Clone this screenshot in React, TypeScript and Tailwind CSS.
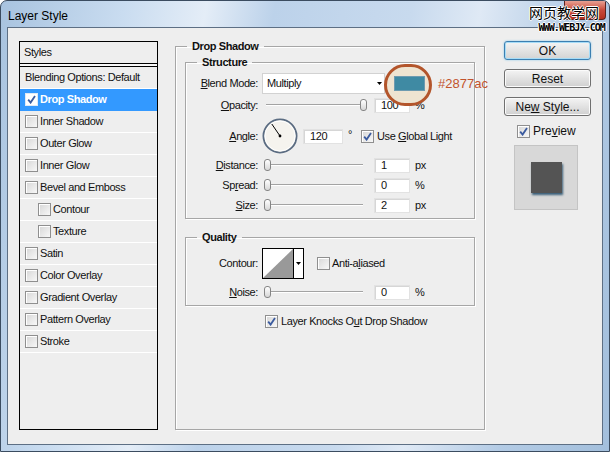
import React from "react"

function Check({ checked = false, onBlue = false }: { checked?: boolean; onBlue?: boolean }) {
  return (
    <span
      className={
        onBlue
          ? "flex h-[13px] w-[13px] shrink-0 items-center justify-center border border-[#dfe9f5] bg-white"
          : "flex h-[13px] w-[13px] shrink-0 items-center justify-center border border-[#8f8f8f] bg-[linear-gradient(135deg,#d6d6d6,#f8f8f8)] shadow-[inset_1px_1px_0_#fff]"
      }
    >
      {checked && (
        <svg width="9" height="9" viewBox="0 0 9 9">
          <path d="M1.2 4.6 L3.6 7.6 L8 1" fill="none" stroke="#3b5b9f" strokeWidth="1.8" />
        </svg>
      )}
    </span>
  )
}

function Label({ children }: { children: React.ReactNode }) {
  return <span className="w-[72px] shrink-0 text-right">{children}</span>
}

function Input({ value, w = "w-[36px]" }: { value: string; w?: string }) {
  return (
    <span className={`${w} flex h-[15px] shrink-0 items-center border border-[#e2e2e2] bg-white pl-[6px] shadow-[inset_1px_1px_0_#d6d6d6]`}>
      {value}
    </span>
  )
}

function Slider({ pos }: { pos: number }) {
  return (
    <div className="relative ml-[4px] h-[16px] w-[106px] shrink-0">
      <div className="absolute left-[4px] right-[5px] top-[7px] h-[2px] border-t border-[#a3a3a3] bg-white" />
      <div
        className="absolute top-[2px] h-[12px] w-[7px] rounded-[3px] border border-[#858585] bg-gradient-to-b from-white to-[#d6d6d6]"
        style={{ left: pos }}
      />
    </div>
  )
}

function SliderRow({ label, value, unit, pos, mt }: { label: React.ReactNode; value: string; unit: string; pos: number; mt: string }) {
  return (
    <div className={`${mt} flex h-[16px] items-center`}>
      <Label>{label}</Label>
      <Slider pos={pos} />
      <span className="ml-[6px]">
        <Input value={value} />
      </span>
      <span className="ml-[5px]">{unit}</span>
    </div>
  )
}

const styles: { name: string; sub?: boolean; checked?: boolean; active?: boolean }[] = [
  { name: "Drop Shadow", checked: true, active: true },
  { name: "Inner Shadow" },
  { name: "Outer Glow" },
  { name: "Inner Glow" },
  { name: "Bevel and Emboss" },
  { name: "Contour", sub: true },
  { name: "Texture", sub: true },
  { name: "Satin" },
  { name: "Color Overlay" },
  { name: "Gradient Overlay" },
  { name: "Pattern Overlay" },
  { name: "Stroke" },
]

function Button({ children, primary = false }: { children: React.ReactNode; primary?: boolean }) {
  return (
    <div
      className={
        primary
          ? "flex h-[19px] w-[87px] items-center justify-center rounded-[3px] border border-[#3c7fb1] bg-gradient-to-b from-[#f4f4f4] to-[#d3d3d3] shadow-[inset_0_0_0_1px_#a6dcf7,0_0_2px_#7fc4ec]"
          : "flex h-[19px] w-[87px] items-center justify-center rounded-[3px] border border-[#707070] bg-gradient-to-b from-[#f4f4f4] to-[#d0d0d0] shadow-[inset_0_0_0_1px_#fbfbfb]"
      }
    >
      {children}
    </div>
  )
}

export default function App() {
  return (
    <div className="relative flex h-[452px] w-[610px] flex-col overflow-hidden rounded-t-[7px] border border-[#3b4c60] bg-[linear-gradient(100deg,#a8c3df_0%,#c9dcf0_18%,#e4edf7_30%,#bcd2ea_40%,#c8daee_60%,#dfe9f5_70%,#b3cbe5_84%,#a3bfdc_100%)] font-['Liberation_Sans',Arial,sans-serif] text-[11px] tracking-[-0.4px] text-[#111]">
      {/* titel */}
      <div className="flex h-[26px] shrink-0 items-start justify-between">
        <span className="pl-[7px] pt-[6px] text-[12px] tracking-normal text-black">Layer Style</span>
        <div className="mr-[3px] h-[19px] w-[42px] rounded-b-[4px] border border-t-0 border-[#5a2320] bg-gradient-to-b from-[#e8a093] via-[#c8493a] to-[#b3301f]" />
      </div>

      {/* watermark */}
      <div className="absolute right-[4px] top-[4px] flex flex-col items-end leading-none">
        <span className="mr-[6px] font-['Noto_Sans_CJK_SC',sans-serif] text-[14px] leading-[15px] tracking-normal text-black [text-shadow:1px_0_0_#fff,-1px_0_0_#fff,0_1px_0_#fff,0_-1px_0_#fff]">
          网页教学网
        </span>
        <span className="mt-[3px] font-['DejaVu_Sans_Mono',monospace] text-[10px] font-bold leading-[10px] tracking-[-0.9px] text-black [text-shadow:1px_0_0_#fff,-1px_0_0_#fff,0_1px_0_#fff,0_-1px_0_#fff]">
          WWW.WEBJX.COM
        </span>
      </div>

      {/* client */}
      <div className="mx-[6px] mb-[6px] flex flex-1 items-start border border-[#5d6f84] bg-[#eeeeee] pl-[11px]">
        {/* styles list */}
        <div className="mt-[13px] flex h-[389px] w-[139px] shrink-0 flex-col border border-black">
          <div className="flex h-[22px] shrink-0 items-center border-b border-black pl-[4px]">Styles</div>
          <div className="h-[2px] shrink-0 bg-[#f7f7f7]" />
          <div className="flex h-[23px] shrink-0 items-center border-t border-b border-t-black border-b-white pl-[5px]">
            Blending Options: Default
          </div>
          {styles.map((s) => (
            <div
              key={s.name}
              className={
                s.active
                  ? "flex h-[22px] shrink-0 items-center gap-[2px] border-b border-[#3399ff] bg-[#3399ff] pl-[5px] font-bold text-white"
                  : s.sub
                    ? "flex h-[22px] shrink-0 items-center gap-[2px] border-b border-white pl-[18px]"
                    : "flex h-[22px] shrink-0 items-center gap-[2px] border-b border-white pl-[5px]"
              }
            >
              <Check checked={s.checked} onBlue={s.active} />
              <span>{s.name}</span>
            </div>
          ))}
        </div>

        {/* drop shadow */}
        <fieldset className="ml-[17px] mt-[12px] h-[390px] w-[310px] shrink-0 border border-[#a6a6a6] shadow-[inset_1px_1px_0_#fff,1px_1px_0_#fff]">
          <legend className="ml-[11px] px-[5px] font-bold leading-[12px]">Drop Shadow</legend>

          <div className="px-[9px] pt-[4px]">
            <fieldset className="border border-[#a6a6a6] pb-[5px] shadow-[inset_1px_1px_0_#fff,1px_1px_0_#fff]">
              <legend className="ml-[11px] px-[5px] font-bold leading-[12px]">Structure</legend>

              <div className="mt-[5px] flex h-[21px] items-center">
                <Label>
                  <u>B</u>lend Mode:
                </Label>
                <div className="ml-[4px] flex h-[21px] w-[123px] shrink-0 items-center justify-between border border-[#d2d2d2] bg-white pl-[4px] pr-[2px]">
                  <span>Multiply</span>
                  <svg width="5" height="3" viewBox="0 0 5 3">
                    <path d="M0 0 H5 L2.5 3 Z" fill="#000" />
                  </svg>
                </div>
                <div className="relative ml-[9px] h-[15px] w-[31px] shrink-0">
                  <div className="absolute left-[-10px] top-[-12px] z-10 h-[42px] w-[48px] rounded-full border-[3px] border-[#b3552b] bg-[#eee4d1]" />
                  <div className="relative z-20 h-[15px] w-[31px] border border-[#6d9bb0] bg-[#3f8aa3]" />
                  <span className="absolute left-[44px] top-[-2px] z-20 font-['Liberation_Sans',Arial,sans-serif] text-[13px] tracking-normal text-[#c2532c]">
                    #2877ac
                  </span>
                </div>
              </div>

              <SliderRow label={<><u>O</u>pacity:</>} value="100" unit="%" pos={98} mt="mt-[3px]" />

              <div className="mt-[5px] flex h-[36px] items-center">
                <Label>
                  <u>A</u>ngle:
                </Label>
                <svg className="ml-[4px] shrink-0" width="36" height="36" viewBox="0 0 36 36">
                  <circle cx="18" cy="18" r="16.6" fill="#f5f3ee" stroke="#5b6c82" strokeWidth="1.8" />
                  <circle cx="18" cy="18" r="15" fill="none" stroke="#fff" strokeWidth="1" />
                  <line x1="18" y1="18" x2="9.8" y2="6" stroke="#000" strokeWidth="1" />
                  <circle cx="18" cy="18" r="1.4" fill="#000" />
                </svg>
                <span className="ml-[5px]">
                  <Input value="120" w="w-[40px]" />
                </span>
                <span className="ml-[5px] self-start pt-[8px]">°</span>
                <span className="ml-[9px]">
                  <Check checked />
                </span>
                <span className="ml-[3px]">
                  Use <u>G</u>lobal Light
                </span>
              </div>

              <SliderRow label={<><u>D</u>istance:</>} value="1" unit="px" pos={2} mt="mt-[3px]" />
              <SliderRow label={<>Sp<u>r</u>ead:</>} value="0" unit="%" pos={2} mt="mt-[4px]" />
              <SliderRow label={<><u>S</u>ize:</>} value="2" unit="px" pos={2} mt="mt-[4px]" />
            </fieldset>

            <fieldset className="mt-[12px] border border-[#a6a6a6] pb-[5px] shadow-[inset_1px_1px_0_#fff,1px_1px_0_#fff]">
              <legend className="ml-[11px] px-[5px] font-bold leading-[12px]">Quality</legend>

              <div className="mt-[5px] flex h-[31px] items-center">
                <Label>Contour:</Label>
                <div className="ml-[4px] flex h-[31px] w-[42px] shrink-0 border border-black bg-white">
                  <svg width="30" height="29" viewBox="0 0 30 29">
                    <path d="M0 29 L30 0 L30 29 Z" fill="#999" />
                  </svg>
                  <div className="flex flex-1 items-center justify-center border-l border-black">
                    <svg width="5" height="3" viewBox="0 0 5 3">
                      <path d="M0 0 H5 L2.5 3 Z" fill="#000" />
                    </svg>
                  </div>
                </div>
                <span className="ml-[13px]">
                  <Check />
                </span>
                <span className="ml-[2px]">
                  Anti-a<u>l</u>iased
                </span>
              </div>

              <SliderRow label={<><u>N</u>oise:</>} value="0" unit="%" pos={2} mt="mt-[5px]" />
            </fieldset>

            <div className="mt-[8px] flex h-[14px] items-center pl-[80px]">
              <Check checked />
              <span className="ml-[3px]">
                Layer Knocks O<u>u</u>t Drop Shadow
              </span>
            </div>
          </div>
        </fieldset>

        {/* buttons */}
        <div className="ml-[19px] mt-[13px] flex flex-col text-[12px] tracking-normal">
          <Button primary>OK</Button>
          <div className="mt-[9px]">
            <Button>Reset</Button>
          </div>
          <div className="mt-[9px]">
            <Button>
              <span>
                Ne<u>w</u> Style...
              </span>
            </Button>
          </div>
          <div className="ml-[13px] mt-[8px] flex h-[14px] items-center gap-[3px]">
            <Check checked />
            <span>
              Pre<u>v</u>iew
            </span>
          </div>
          <div className="ml-[10px] mt-[7px] flex h-[65px] w-[64px] items-center justify-center border border-[#c4c4c4] bg-[#d8d8d8]">
            <div className="h-[31px] w-[31px] bg-[#545454] shadow-[1px_2px_2px_#3a5f78]" />
          </div>
        </div>
      </div>
    </div>
  )
}
